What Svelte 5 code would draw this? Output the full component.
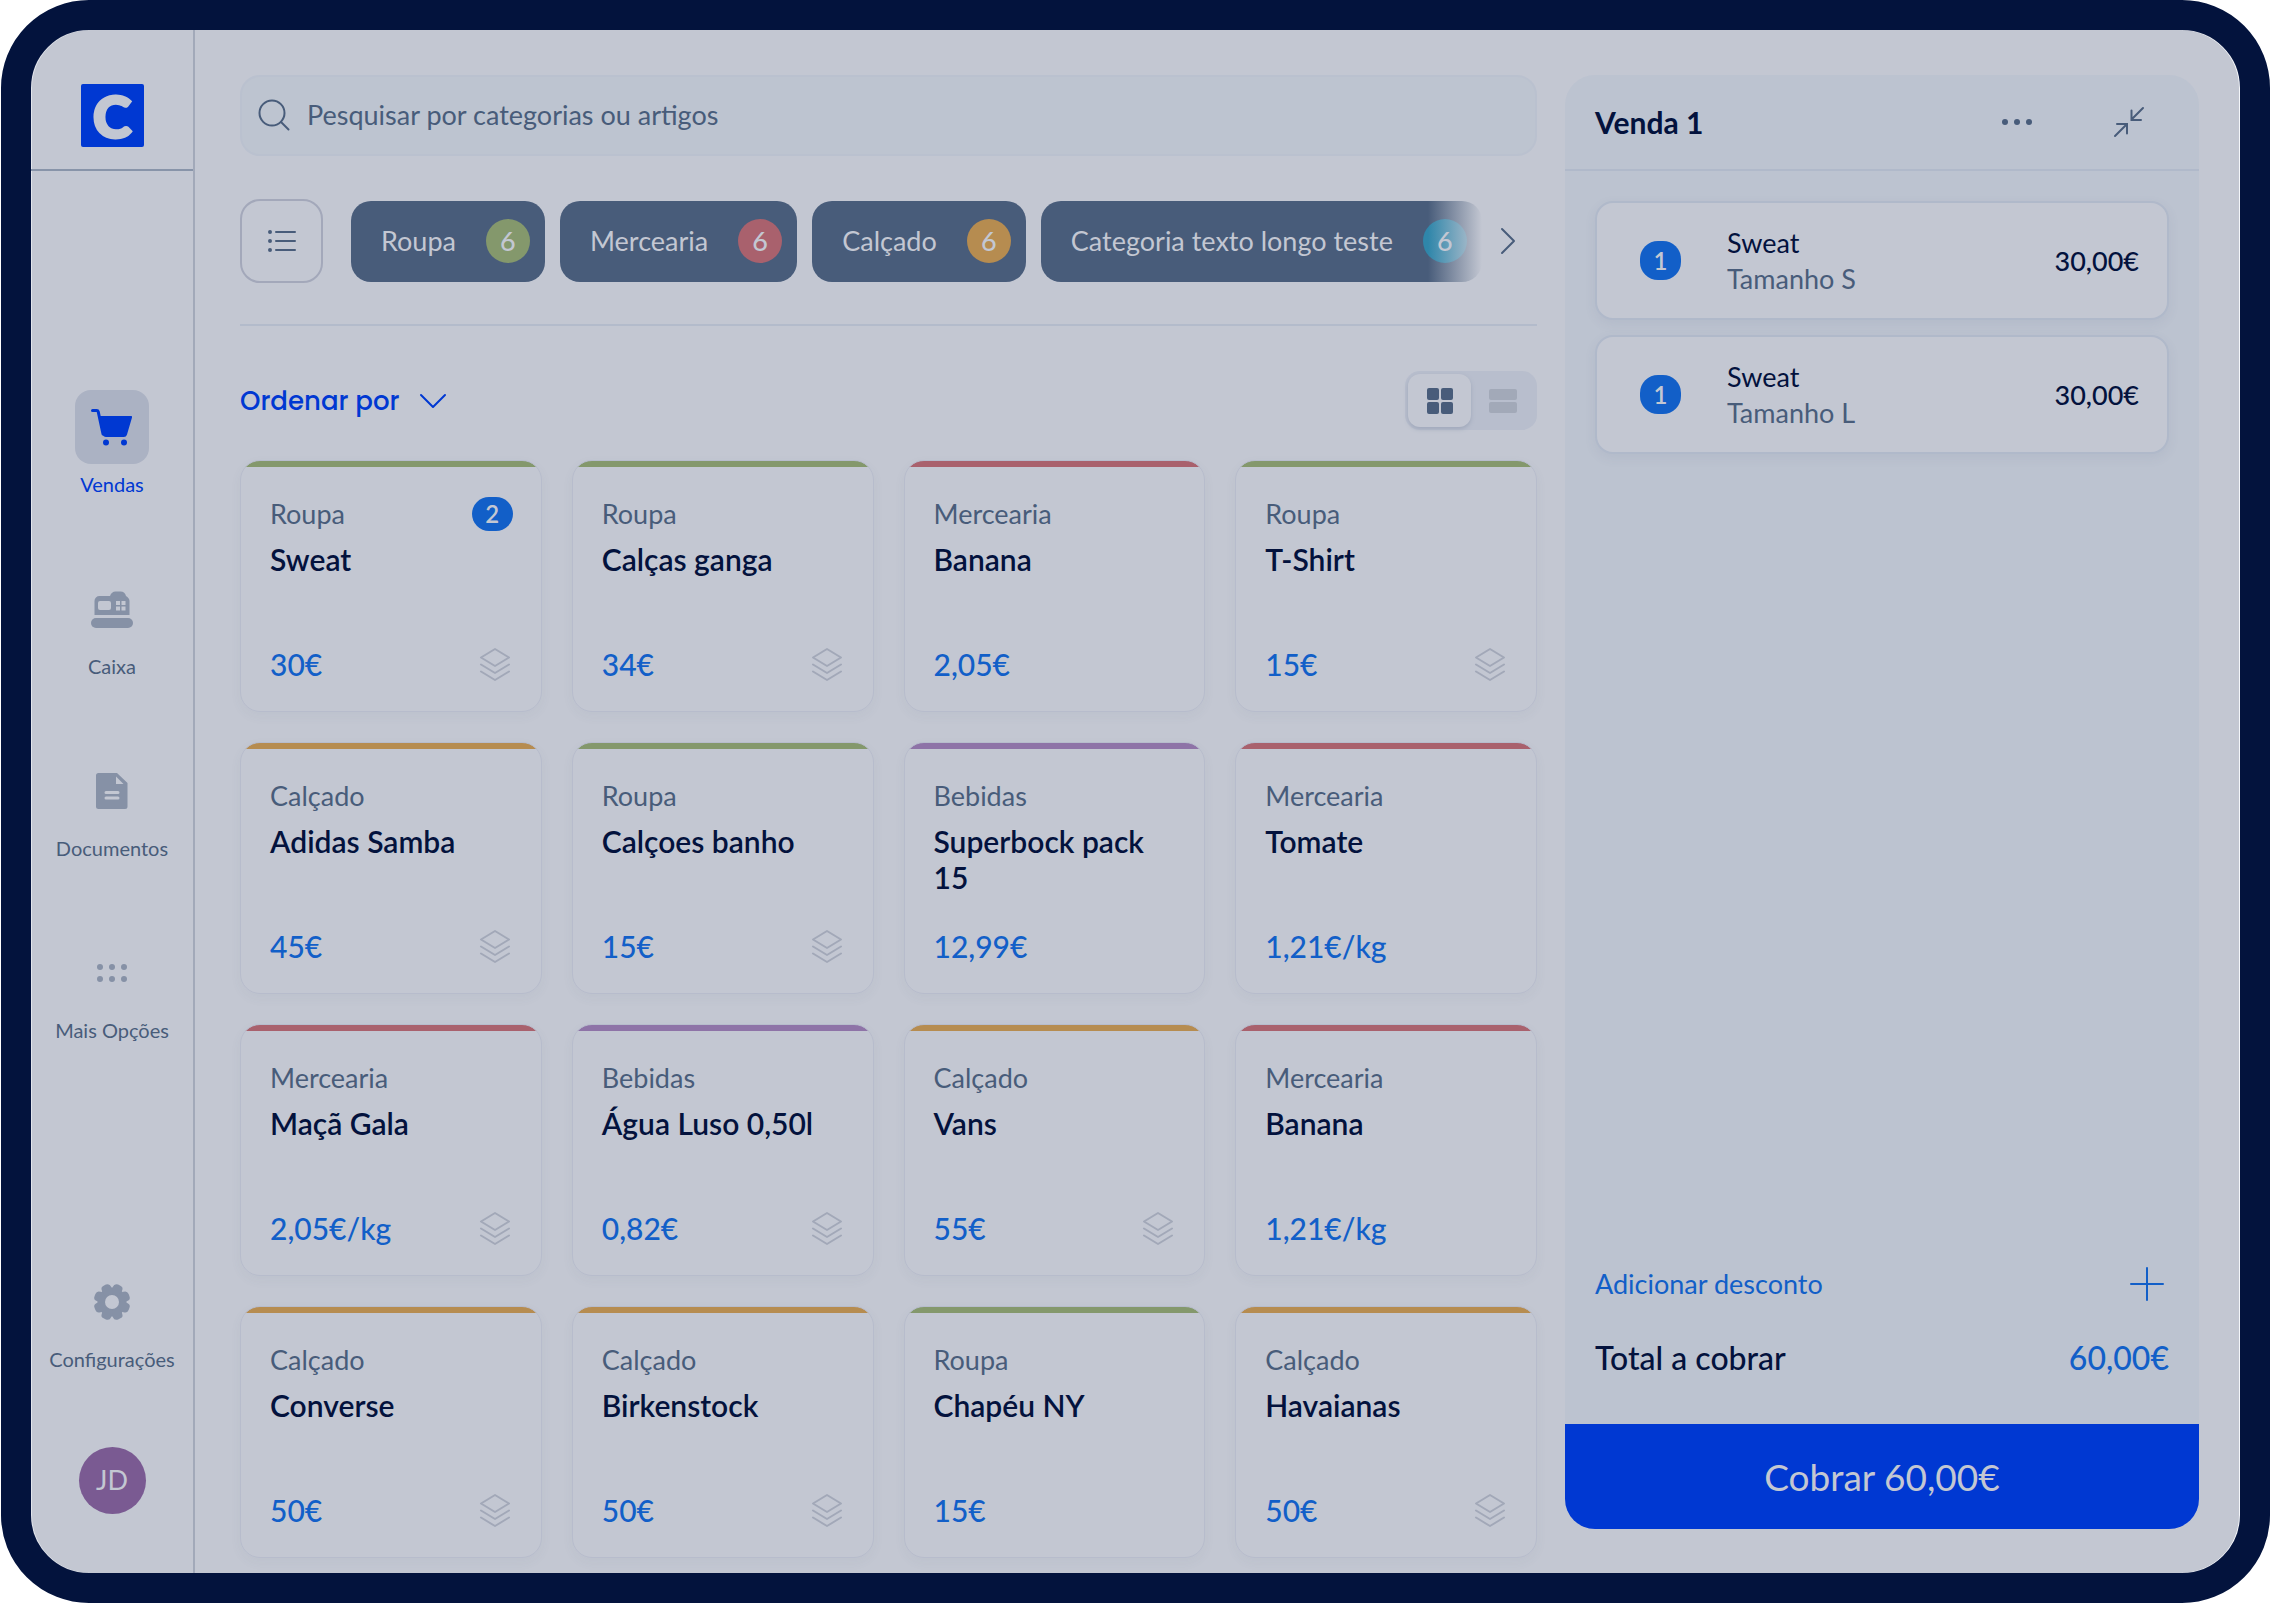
<script>
    const nav = [
        { label: 'Vendas', icon: 'cart' },
        { label: 'Caixa', icon: 'register' },
        { label: 'Documentos', icon: 'document' },
        { label: 'Mais Opções', icon: 'dots' },
    ];

    const categories = [
        { name: 'Roupa', count: 6, tone: 'green' },
        { name: 'Mercearia', count: 6, tone: 'red' },
        { name: 'Calçado', count: 6, tone: 'orange' },
        { name: 'Categoria texto longo teste', count: 6, tone: 'teal' },
    ];

    const tones = { Roupa: 'green', Mercearia: 'red', 'Calçado': 'orange', Bebidas: 'purple' };

    const products = [
        { category: 'Roupa', name: 'Sweat', price: '30€', variants: true, inCart: 2 },
        { category: 'Roupa', name: 'Calças ganga', price: '34€', variants: true },
        { category: 'Mercearia', name: 'Banana', price: '2,05€' },
        { category: 'Roupa', name: 'T-Shirt', price: '15€', variants: true },
        { category: 'Calçado', name: 'Adidas Samba', price: '45€', variants: true },
        { category: 'Roupa', name: 'Calçoes banho', price: '15€', variants: true },
        { category: 'Bebidas', name: 'Superbock pack 15', price: '12,99€' },
        { category: 'Mercearia', name: 'Tomate', price: '1,21€/kg' },
        { category: 'Mercearia', name: 'Maçã Gala', price: '2,05€/kg', variants: true },
        { category: 'Bebidas', name: 'Água Luso 0,50l', price: '0,82€', variants: true },
        { category: 'Calçado', name: 'Vans', price: '55€', variants: true },
        { category: 'Mercearia', name: 'Banana', price: '1,21€/kg' },
        { category: 'Calçado', name: 'Converse', price: '50€', variants: true },
        { category: 'Calçado', name: 'Birkenstock', price: '50€', variants: true },
        { category: 'Roupa', name: 'Chapéu NY', price: '15€' },
        { category: 'Calçado', name: 'Havaianas', price: '50€', variants: true },
    ];

    const sale = [
        { qty: 1, name: 'Sweat', size: 'Tamanho S', price: '30,00€' },
        { qty: 1, name: 'Sweat', size: 'Tamanho L', price: '30,00€' },
    ];

    let active = $state('Vendas');
    let view = $state('grid');
    let search = $state('');
</script>

<div class="device">
    <aside class="sidebar">
        <div class="brand"><a class="logo" href="#home">C</a></div>
        <nav>
            {#each nav as item}
                <button class="nav-item" class:active={active === item.label} onclick={() => (active = item.label)}>
                    <span class="nav-icon">
                        {#if item.icon === 'cart'}
                            <svg width="42" height="38" viewBox="0 0 42 38">
                                <path d="M1.5 2.5h4.2c.8 0 1.3.4 1.5 1.2L12 26" fill="none" stroke="currentColor" stroke-width="3" stroke-linecap="round" />
                                <path d="M7.5 8H40c.9 0 1.3.7 1 1.5l-5 17c-.6 1.7-1.5 2.5-3.2 2.5H15c-1.8 0-2.9-.9-3.4-2.5z" fill="currentColor" />
                                <circle cx="15" cy="34.5" r="3" fill="currentColor" />
                                <circle cx="33" cy="34.5" r="3" fill="currentColor" />
                            </svg>
                        {:else if item.icon === 'register'}
                            <svg width="42" height="38" viewBox="0 0 42 38">
                                <path fill="currentColor" fill-rule="evenodd" d="M3.5 25V11a5 5 0 0 1 5-5H19c1-3 3-4.500 5.500-4.500h5c3 0 5 2 5.500 4.500 2 1 3.500 3 3.500 5v14zM9 11a2 2 0 0 0-2 2v5a2 2 0 0 0 2 2h9a2 2 0 0 0 2-2v-5a2 2 0 0 0-2-2zM25 11v4h4v-4zM30.5 11v4h4v-4zM25 16.5v4h4v-4zM30.5 16.5v4h4v-4z" />
                                <rect x="0" y="28" width="42" height="10" rx="5" fill="currentColor" />
                            </svg>
                        {:else if item.icon === 'document'}
                            <svg width="32" height="36" viewBox="0 0 32 36">
                                <path fill="currentColor" d="M2.5 0H21l10.500 10v23.500a2.500 2.500 0 0 1-2.500 2.500H2.500A2.500 2.500 0 0 1 0 33.500v-31A2.500 2.500 0 0 1 2.500 0z" />
                                <path class="cut" d="M20 3.500V11h7.500z" />
                                <path class="cut-line" d="M10 19.500h12M10 25h12" />
                            </svg>
                        {:else}
                            <svg width="30" height="20" viewBox="0 0 30 20" fill="currentColor">
                                {#each [3, 15, 27] as x}
                                    <circle cx={x} cy="4" r="3" />
                                    <circle cx={x} cy="16" r="3" />
                                {/each}
                            </svg>
                        {/if}
                    </span>
                    {item.label}
                </button>
            {/each}
        </nav>
        <div class="bottom">
            <button class="nav-item">
                <span class="nav-icon">
                    <svg width="38" height="38" viewBox="0 0 38 38">
                        <g fill="currentColor">
                            <circle cx="19" cy="19" r="14.5" />
                            {#each [22.5, 67.5, 112.5, 157.5, 202.5, 247.5, 292.5, 337.5] as angle}
                                <rect x="14" y="0.6" width="10" height="12" rx="4" transform="rotate({angle} 19 19)" />
                            {/each}
                        </g>
                        <circle class="cut" cx="19" cy="19" r="7" />
                    </svg>
                </span>
                Configurações
            </button>
            <button class="avatar">JD</button>
        </div>
    </aside>

    <main>
        <label class="search">
            <svg width="32" height="32" viewBox="0 0 32 32" fill="none" stroke="currentColor" stroke-width="2" stroke-linecap="round">
                <circle cx="14" cy="14" r="12.5" />
                <path d="M23 23l7.500 7.500" />
            </svg>
            <input type="text" bind:value={search} placeholder="Pesquisar por categorias ou artigos" aria-label="Pesquisar por categorias ou artigos" />
        </label>

        <div class="filters">
            <button class="all" aria-label="Todas as categorias">
                <svg width="30" height="24" viewBox="0 0 30 24" fill="none" stroke="currentColor" stroke-width="2" stroke-linecap="round">
                    <path d="M9 3h19M9 12h19M9 21h19" />
                    <path d="M3 3h0M3 12h0M3 21h0" stroke-width="4" />
                </svg>
            </button>
            <div class="chips">
                {#each categories as cat}
                    <button class="chip">{cat.name}<span class="count {cat.tone}">{cat.count}</span></button>
                {/each}
            </div>
            <button class="next" aria-label="Seguinte">
                <svg width="18" height="28" viewBox="0 0 18 28" fill="none" stroke="currentColor" stroke-width="2" stroke-linecap="round" stroke-linejoin="round">
                    <path d="M3 2l12 12L3 26" />
                </svg>
            </button>
        </div>

        <div class="toolbar">
            <label class="sort">
                <select aria-label="Ordenar por"><option>Ordenar por</option></select>
                <svg width="28" height="16" viewBox="0 0 28 16" fill="none" stroke="currentColor" stroke-width="2" stroke-linecap="round" stroke-linejoin="round">
                    <path d="M2 2l12 12L26 2" />
                </svg>
            </label>
            <div class="views">
                <button class:on={view === 'grid'} aria-label="Grelha" aria-pressed={view === 'grid'} onclick={() => (view = 'grid')}>
                    <svg width="28" height="28" viewBox="0 0 28 28" fill="currentColor">
                        <rect x="1" y="1" width="12" height="12" rx="2" />
                        <rect x="15" y="1" width="12" height="12" rx="2" />
                        <rect x="1" y="15" width="12" height="12" rx="2" />
                        <rect x="15" y="15" width="12" height="12" rx="2" />
                    </svg>
                </button>
                <button class:on={view === 'list'} aria-label="Lista" aria-pressed={view === 'list'} onclick={() => (view = 'list')}>
                    <svg width="28" height="24" viewBox="0 0 28 24" fill="currentColor">
                        <rect x="0" y="0" width="28" height="11" rx="2" />
                        <rect x="0" y="13" width="28" height="11" rx="2" />
                    </svg>
                </button>
            </div>
        </div>

        <div class="products">
            {#each products as product}
                <button class="product {tones[product.category]}">
                    <span class="row">
                        <span class="category">{product.category}</span>
                        {#if product.inCart}<span class="pill">{product.inCart}</span>{/if}
                    </span>
                    <span class="name">{product.name}</span>
                    <span class="row last">
                        <span class="price">{product.price}</span>
                        {#if product.variants}
                            <svg width="36" height="34" viewBox="0 0 36 34" fill="none" stroke="currentColor" stroke-width="2" stroke-linejoin="round" stroke-linecap="round">
                                <path d="M18 2l14 8.500L18 19 4 10.500z" />
                                <path d="M4 17.500L18 26l14-8.500M4 24.500L18 33l14-8.500" />
                            </svg>
                        {/if}
                    </span>
                </button>
            {/each}
        </div>
    </main>

    <section class="sale">
        <header>
            <h2>Venda 1</h2>
            <button aria-label="Opções">
                <svg width="32" height="8" viewBox="0 0 32 8" fill="currentColor">
                    <circle cx="4" cy="4" r="3" />
                    <circle cx="16" cy="4" r="3" />
                    <circle cx="28" cy="4" r="3" />
                </svg>
            </button>
            <button aria-label="Minimizar">
                <svg width="32" height="32" viewBox="0 0 32 32" fill="none" stroke="currentColor" stroke-width="2" stroke-linecap="round">
                    <path d="M30 2L18.500 13.500M18.500 4.500v9.500h9.500" />
                    <path d="M2 30l11.500-11.500M4 18h10v9.500" />
                </svg>
            </button>
        </header>
        <ul>
            {#each sale as line}
                <li>
                    <span class="pill big">{line.qty}</span>
                    <div class="line">
                        <div>{line.name}</div>
                        <div class="size">{line.size}</div>
                    </div>
                    <span class="amount">{line.price}</span>
                </li>
            {/each}
        </ul>
        <button class="discount">
            Adicionar desconto
            <svg width="36" height="36" viewBox="0 0 36 36" fill="none" stroke="currentColor" stroke-width="2" stroke-linecap="round">
                <path d="M18 2v32M2 18h32" />
            </svg>
        </button>
        <div class="total">
            <span>Total a cobrar</span>
            <span class="sum">60,00€</span>
        </div>
        <button class="charge">Cobrar 60,00€</button>
    </section>
</div>

<style>
    :global(body) {
        background: #fff;
    }

    button, input, select {
        font: inherit;
        color: inherit;
        background: none;
        border: 0;
        padding: 0;
        margin: 0;
        cursor: pointer;
    }

    svg {
        display: block;
        flex: none;
    }

    .device {
        display: flex;
        box-sizing: border-box;
        min-height: 100vh;
        margin-left: 1px;
        border: 30px solid #03133d;
        border-radius: 88px;
        background: #c3c7d2;
        box-shadow: inset 1px 0 #e2e5ec, inset -1px 0 #f4f6fa;
        color: #03123d;
        font-family: Lato, "Liberation Sans", sans-serif;
        font-size: 27px;
        line-height: 36px;
        overflow: hidden;
    }

    .sidebar {
        display: flex;
        flex-direction: column;
        flex: none;
        width: 162px;
        border-right: 2px solid #a2a9b9;
        color: #8691a6;
    }

    .brand {
        display: flex;
        justify-content: center;
        padding: 54px 0 22px;
        border-bottom: 2px solid #8894a9;
    }

    .logo {
        width: 63px;
        height: 63px;
        border-radius: 2px;
        background: #0038d2;
        color: #c3c7d2;
        font-size: 58px;
        font-weight: 900;
        line-height: 63px;
        text-align: center;
        text-decoration: none;
        -webkit-text-stroke: 3px #c3c7d2;
    }

    nav, .bottom {
        display: flex;
        flex-direction: column;
        align-items: center;
        gap: 76px;
    }

    nav {
        padding-top: 219px;
    }

    .bottom {
        margin-top: auto;
        padding: 76px 0 59px;
    }

    .nav-item {
        display: flex;
        flex-direction: column;
        align-items: center;
        gap: 8px;
        color: #485c7a;
        font-size: 20px;
        line-height: 24px;
    }

    .nav-icon {
        display: flex;
        align-items: center;
        justify-content: center;
        width: 74px;
        height: 74px;
        border-radius: 16px;
        color: #8691a6;
    }

    .active, .active .nav-icon {
        color: #0038d2;
    }

    .active .nav-icon {
        background: #abb2c3;
    }

    .cut {
        fill: #c3c7d2;
    }

    .cut-line {
        stroke: #c3c7d2;
        stroke-width: 3;
        stroke-linecap: round;
    }

    .avatar {
        width: 67px;
        height: 67px;
        padding-bottom: 2px;
        border-radius: 50%;
        background: #7a5a92;
        color: #c3c7d2;
    }

    main {
        flex: 1;
        min-width: 0;
        padding: 45px 28px 15px 45px;
    }

    .search {
        display: flex;
        align-items: center;
        gap: 17px;
        box-sizing: border-box;
        height: 81px;
        padding: 0 16px 2px;
        border: 2px solid #bac1cf;
        border-radius: 20px;
        background: #bdc4d0;
        color: #485c7a;
    }

    .search input {
        flex: 1;
        outline: 0;
        cursor: text;
    }

    .search input::placeholder {
        color: #485c7a;
        opacity: 1;
    }

    .filters {
        display: flex;
        align-items: center;
        padding: 43px 0 41px;
        border-bottom: 2px solid #b3bbcb;
        color: #485c7a;
    }

    .all {
        display: flex;
        align-items: center;
        justify-content: center;
        flex: none;
        box-sizing: border-box;
        width: 83px;
        height: 84px;
        margin-right: 28px;
        border: 2px solid #a3a8ba;
        border-radius: 20px;
    }

    .chips {
        position: relative;
        display: flex;
        gap: 15px;
        overflow: hidden;
    }

    .chips::after {
        content: "";
        position: absolute;
        top: 0;
        right: 0;
        width: 54px;
        height: 100%;
        background: linear-gradient(to right, transparent, #c3c7d2);
    }

    .chip {
        display: flex;
        align-items: center;
        gap: 30px;
        flex: none;
        height: 81px;
        padding: 0 15px 0 30px;
        border-radius: 20px;
        background: #485c7a;
        color: #c3c7d2;
        white-space: nowrap;
    }

    .count {
        width: 44px;
        height: 44px;
        border-radius: 50%;
        background: var(--tone);
        line-height: 44px;
        font-weight: 500;
    }

    .green { --tone: #84986c; }
    .red { --tone: #a9616d; }
    .orange { --tone: #b68c50; }
    .teal { --tone: #2f86aa; }
    .purple { --tone: #8e73a7; }

    .next {
        margin: 0 20px 0 auto;
    }

    .toolbar {
        display: flex;
        align-items: center;
        justify-content: space-between;
        padding: 45px 0 30px;
    }

    .sort {
        display: flex;
        align-items: center;
        gap: 19px;
        color: #0038d2;
        font-family: Poppins, Inter, sans-serif;
        font-size: 26px;
        font-weight: 500;
    }

    .sort select {
        appearance: none;
    }

    .views {
        display: flex;
        padding: 3px;
        border-radius: 15px;
        background: #b8becd;
    }

    .views button {
        display: flex;
        align-items: center;
        justify-content: center;
        width: 63px;
        height: 53px;
        border-radius: 12px;
        color: #a2a9b8;
    }

    .views .on {
        background: #c3c7d2;
        color: #485c7a;
        box-shadow: 0 2px 4px #9fa7ba;
    }

    .products {
        display: grid;
        grid-template-columns: repeat(4, minmax(0, 1fr));
        gap: 30px;
    }

    .product {
        display: flex;
        flex-direction: column;
        box-sizing: border-box;
        min-height: 252px;
        padding: 35px 28px 29px 29px;
        border: 1px solid #b7bccc;
        border-radius: 20px;
        background: linear-gradient(var(--tone) 6px, transparent 6px);
        box-shadow: 0 4px 12px rgba(72, 92, 122, 0.05);
        text-align: left;
    }

    .row {
        display: flex;
        align-items: center;
        justify-content: space-between;
    }

    .last {
        margin-top: auto;
        color: #a2a8b8;
    }

    .category {
        color: #485c7a;
    }

    .name {
        margin-top: 9px;
        font-size: 30px;
        font-weight: 600;
    }

    .price {
        color: #125fc8;
        font-size: 30px;
        font-weight: 500;
    }

    .pill {
        width: 41px;
        border-radius: 17px;
        background: #125fc8;
        color: #c3c7d2;
        font-size: 24px;
        font-weight: 600;
        line-height: 34px;
        text-align: center;
    }

    .big {
        border-radius: 18px;
        line-height: 39px;
    }

    .sale {
        display: flex;
        flex-direction: column;
        flex: none;
        width: 30%;
        min-width: 480px;
        max-width: 634px;
        margin: 45px 41px 44px 0;
        border-radius: 30px;
        background: #bcc3d0;
        overflow: hidden;
    }

    header {
        display: flex;
        align-items: center;
        height: 94px;
        padding: 0 54px 0 30px;
        border-bottom: 2px solid #b0b9ca;
        color: #485c7a;
    }

    header button + button {
        margin-left: 80px;
    }

    h2 {
        margin: 0 auto 0 0;
        color: #03123d;
        font-size: 30px;
        font-weight: 700;
    }

    ul {
        display: flex;
        flex-direction: column;
        gap: 15px;
        flex: 1;
        margin: 0;
        padding: 30px;
        list-style: none;
    }

    li {
        display: flex;
        align-items: center;
        box-sizing: border-box;
        height: 119px;
        padding: 0 28px 0 43px;
        border: 2px solid #b0b9ca;
        border-radius: 18px;
        background: #c3c7d2;
        box-shadow: 0 4px 12px rgba(72, 92, 122, 0.08);
    }

    .line {
        flex: 1;
        margin-left: 46px;
    }

    .size {
        color: #485c7a;
    }

    .amount {
        font-weight: 500;
    }

    .discount, .total {
        display: flex;
        align-items: center;
        justify-content: space-between;
        padding: 0 30px;
    }

    .discount {
        padding-right: 34px;
        color: #125fc8;
    }

    .total {
        padding-top: 38px;
        padding-bottom: 48px;
        font-size: 32px;
        font-weight: 500;
    }

    .sum {
        color: #125fc8;
    }

    .charge {
        height: 105px;
        background: #0038d2;
        color: #c3c7d2;
        font-size: 37px;
    }
</style>
